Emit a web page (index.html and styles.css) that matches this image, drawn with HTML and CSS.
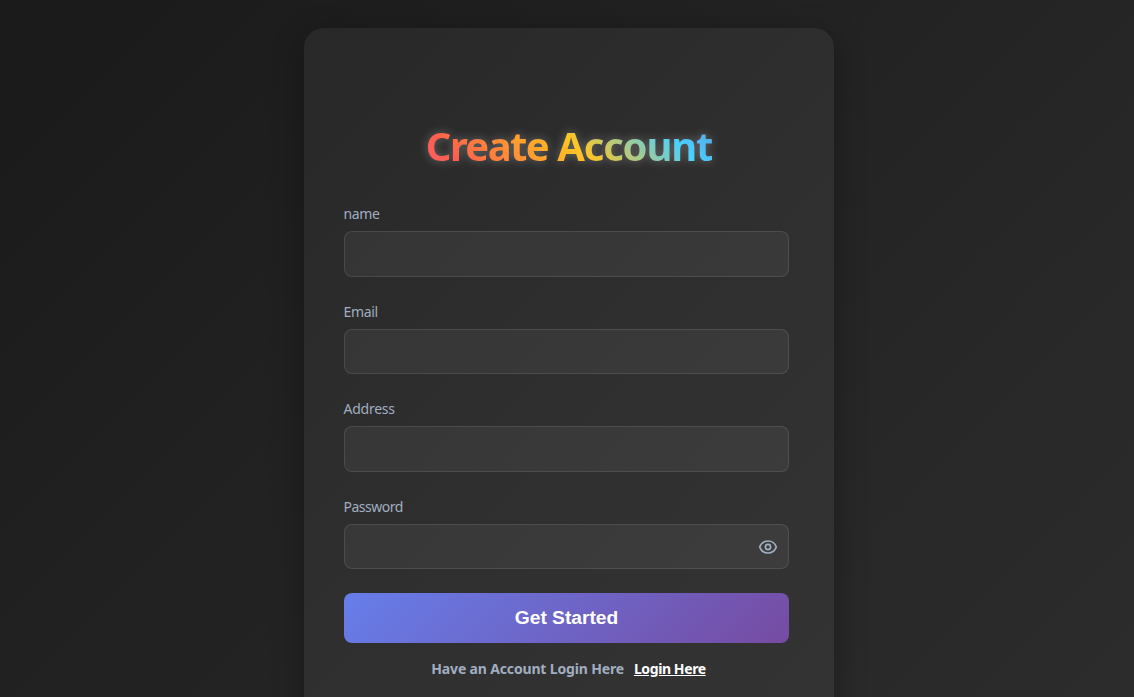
FILE: index.html
```html
<!DOCTYPE html>
<html lang="en">
<head>
<meta charset="utf-8">
<title>Create Account</title>
<link rel="stylesheet" href="styles.css">
</head>
<body>
<main class="page">
  <form class="card">
    <h1 class="title"><span class="title-text"><span class="tight">Create</span> Account</span></h1>
    <div class="field">
      <label class="label label-name" for="name">name</label>
      <input class="input" id="name" type="text">
    </div>
    <div class="field">
      <label class="label label-email" for="email">Email</label>
      <input class="input" id="email" type="email">
    </div>
    <div class="field">
      <label class="label label-address" for="address">Address</label>
      <input class="input" id="address" type="text">
    </div>
    <div class="field">
      <label class="label label-password" for="password">Password</label>
      <div class="password">
        <input class="input" id="password" type="password">
        <button class="toggle" type="button" aria-label="Show password">
          <svg class="eye" viewBox="0 0 20 20" fill="none" stroke="currentColor" stroke-width="1.7">
            <path d="M1.7 10C3.1 6.100 6.300 4 10 4s6.900 2.100 8.300 6c-1.400 3.900-4.600 6-8.300 6s-6.900-2.100-8.300-6z" stroke-linejoin="round"/>
            <circle cx="10" cy="10" r="2.600"/>
          </svg>
        </button>
      </div>
    </div>
    <button class="submit" type="button">Get Started</button>
    <p class="footer"><span class="prompt">Have an Account Login Here</span><a class="login" href="#">Login Here</a></p>
  </form>
</main>
</body>
</html>
```
FILE: styles.css
```css
* { box-sizing: border-box; }
body {
  margin: 0;
  height: 697px;
  overflow: hidden;
  font-family: "Segoe UI", "Noto Sans", "Open Sans", sans-serif;
  background: #222;
}
.page {
  height: 697px;
  overflow: hidden;
  padding: 28px 0 0 4px;
  display: flex;
  justify-content: center;
  background: linear-gradient(135deg, #1a1a1a, #2d2d2d) 0 0 / 100% 768px no-repeat;
}
.card {
  width: 530px;
  height: 712px;
  padding: 91px 45px 0 40px;
  border-radius: 20px;
  background: rgba(255, 255, 255, 0.05);
  box-shadow: 0 8px 32px rgba(0, 0, 0, 0.3);
}
.title {
  margin: 0 -5px 31.200px 0;
  height: 54px;
  line-height: 54px;
  font-size: 40px;
  letter-spacing: -1.200px;
  text-align: center;
  white-space: nowrap;
  filter: drop-shadow(0 0 5px rgba(255, 255, 255, 0.3));
}
.title-text {
  color: transparent;
  background: linear-gradient(45deg, #ff5f6d 0%, #ff5e4d 13%, #ff9a30 35%, #ffc524 52%, #48d1ff 83%, #5aa6e4 96%);
  -webkit-background-clip: text;
  background-clip: text;
}
.tight { letter-spacing: -1.600px; }
.field { height: 97.600px; }
.label {
  display: block;
  width: max-content;
  height: 27px;
  margin-left: -0.500px;
  line-height: 20px;
  font-size: 14px;
  color: #a0aec0;
}
.label-name { letter-spacing: -0.400px; }
.label-email { letter-spacing: -0.350px; }
.label-address { letter-spacing: -0.250px; }
.label-password { letter-spacing: -0.480px; }
.input {
  display: block;
  width: 100%;
  height: 45.400px;
  padding: 12px 16px;
  border: 1px solid rgba(255, 255, 255, 0.1);
  border-radius: 8px;
  background: rgba(255, 255, 255, 0.05);
  color: #fff;
  outline: none;
}
.password { position: relative; }
.toggle {
  position: absolute;
  right: 11px;
  top: 13px;
  width: 20px;
  height: 20px;
  padding: 0;
  border: 0;
  background: none;
  color: #a0aec0;
}
.eye { display: block; width: 20px; height: 20px; }
.submit {
  display: block;
  width: 100%;
  height: 50px;
  margin-top: -1.600px;
  padding: 0;
  border: 0;
  border-radius: 8px;
  background: linear-gradient(135deg, #667eea, #764ba2);
  color: #fff;
  font: bold 19.200px/48px "Liberation Sans", Arial, sans-serif;
}
.footer {
  display: flex;
  justify-content: center;
  gap: 10px;
  margin: 16px -4px 0 0;
  line-height: 20px;
  font-size: 14px;
  font-weight: 700;
  white-space: nowrap;
}
.prompt { color: #a0aec0; letter-spacing: -0.160px; }
.login { color: #fff; text-decoration: underline; letter-spacing: -0.400px; }
```
